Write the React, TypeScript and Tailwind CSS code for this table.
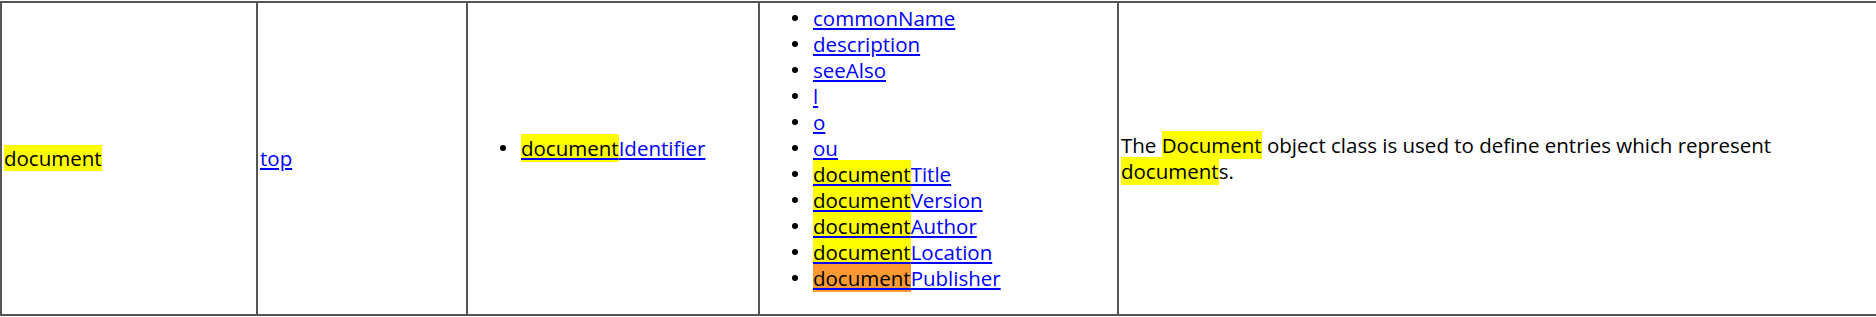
import React from 'react';

type Item = { hl?: 'yellow' | 'orange'; rest: string; plain?: string };

const superiorAttrs: Item[] = [{ hl: 'yellow', rest: 'Identifier' }];

const mayAttrs: Item[] = [
  { plain: 'commonName', rest: '' },
  { plain: 'description', rest: '' },
  { plain: 'seeAlso', rest: '' },
  { plain: 'l', rest: '' },
  { plain: 'o', rest: '' },
  { plain: 'ou', rest: '' },
  { hl: 'yellow', rest: 'Title' },
  { hl: 'yellow', rest: 'Version' },
  { hl: 'yellow', rest: 'Author' },
  { hl: 'yellow', rest: 'Location' },
  { hl: 'orange', rest: 'Publisher' },
];

function AttrList({ items }: { items: Item[] }) {
  return (
    <ul className="mb-[22px] pl-[32px]">
      {items.map((item, i) => (
        <li key={i} className="flex items-center h-[26px]">
          <span className="w-[6px] h-[6px] rounded-full bg-black mr-[15px] shrink-0"></span>
          <a href="#" className="text-[#0000ff] underline">
            {item.hl ? (
              <mark className={`text-black ${item.hl === 'orange' ? 'bg-[#ff9933]' : 'bg-[#ffff00]'}`}>
                document
              </mark>
            ) : null}
            {item.plain ?? item.rest}
          </a>
        </li>
      ))}
    </ul>
  );
}

export default function App() {
  return (
    <div
      className="w-[1876px] h-[317px] bg-white pt-px overflow-hidden text-black text-[20.5px] leading-[26px]"
      style={{ fontFamily: '"Open Sans", "Noto Sans", sans-serif' }}
    >
      <div className="grid grid-cols-[256px_210px_292px_359px_1fr] h-[315px] border-t-2 border-b-2 border-[#555]">
        {/* name */}
        <div className="border-l-2 border-[#555] px-[2px] pb-[2px] flex items-center">
          <mark className="bg-[#ffff00] text-black">document</mark>
        </div>

        {/* superior */}
        <div className="border-l-2 border-[#555] px-[2px] pb-[2px] flex items-center">
          <a href="#" className="text-[#0000ff] underline">top</a>
        </div>

        {/* must */}
        <div className="border-l-2 border-[#555] flex flex-col justify-center">
          <AttrList items={superiorAttrs} />
        </div>

        {/* may */}
        <div className="border-l-2 border-[#555] flex flex-col justify-center">
          <AttrList items={mayAttrs} />
        </div>

        {/* description */}
        <div className="border-l-2 border-[#555] px-[2px] pb-[2px] flex items-center">
          <p className="max-w-[720px]">
            The <mark className="bg-[#ffff00] text-black">Document</mark> object class is used to define entries which represent{' '}
            <mark className="bg-[#ffff00] text-black">document</mark>s.
          </p>
        </div>
      </div>
    </div>
  );
}
